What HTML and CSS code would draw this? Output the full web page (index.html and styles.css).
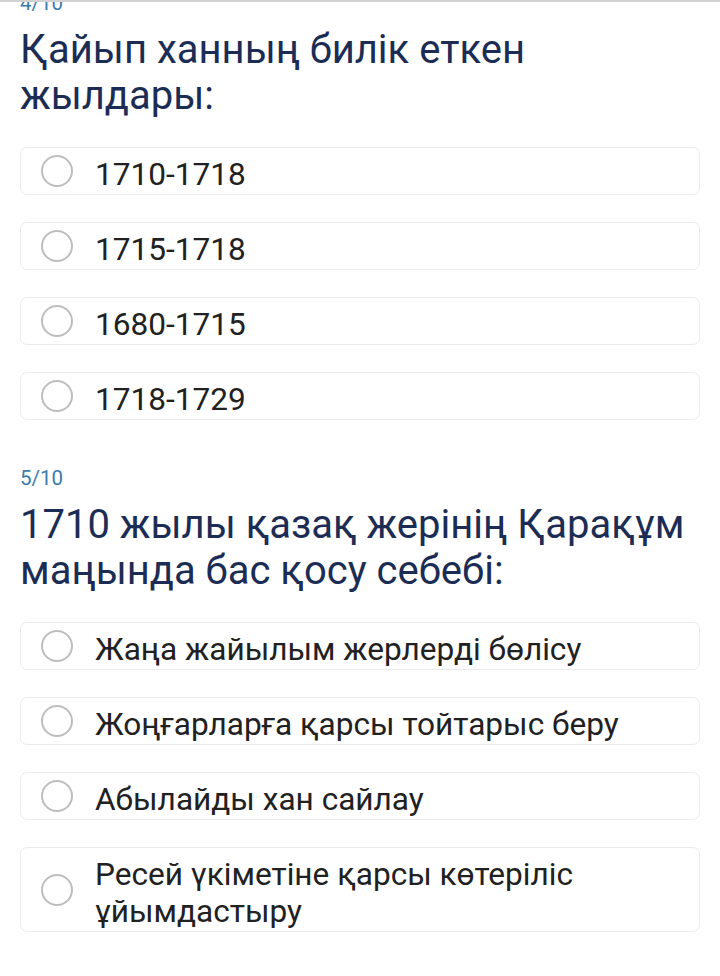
FILE: index.html
```html
<!DOCTYPE html>
<html lang="kk">
<head>
<meta charset="utf-8">
<title>Тест</title>
<link rel="stylesheet" href="styles.css">
</head>
<body>
<div class="top-line"></div>
<main class="page">
  <section class="question first">
    <div class="counter">4/10</div>
    <h2 class="title">Қайып ханның билік еткен жылдары:</h2>
    <div class="options">
      <label class="option"><span class="radio"></span><span class="text">1710-1718</span></label>
      <label class="option"><span class="radio"></span><span class="text">1715-1718</span></label>
      <label class="option"><span class="radio"></span><span class="text">1680-1715</span></label>
      <label class="option"><span class="radio"></span><span class="text">1718-1729</span></label>
    </div>
  </section>
  <section class="question">
    <div class="counter">5/10</div>
    <h2 class="title">1710 жылы қазақ жерінің Қарақұм маңында бас қосу себебі:</h2>
    <div class="options">
      <label class="option"><span class="radio"></span><span class="text">Жаңа жайылым жерлерді бөлісу</span></label>
      <label class="option"><span class="radio"></span><span class="text">Жоңғарларға қарсы тойтарыс беру</span></label>
      <label class="option"><span class="radio"></span><span class="text">Абылайды хан сайлау</span></label>
      <label class="option"><span class="radio"></span><span class="text">Ресей үкіметіне қарсы көтеріліс ұйымдастыру</span></label>
    </div>
  </section>
</main>
</body>
</html>
```

FILE: styles.css
```css
* { box-sizing: border-box; }

html, body {
  margin: 0;
  padding: 0;
  background: #ffffff;
  overflow: hidden;
}

body {
  font-family: Roboto, "Noto Sans", "Liberation Sans", sans-serif;
  color: #212121;
  position: relative;
  width: 720px;
  height: 976px;
}

.top-line {
  position: absolute;
  left: 0;
  top: 0;
  width: 720px;
  height: 2px;
  background: #d2d2d2;
  z-index: 2;
}

.page {
  padding: 0 20px;
}

.question.first {
  margin-top: -9px;
}

.question + .question {
  margin-top: 46px;
}

.counter {
  font-size: 20.5px;
  line-height: 24px;
  color: #3b7cab;
  margin-bottom: 12px;
}

.title {
  margin: 0 0 28px 0;
  font-weight: 400;
  font-size: 40px;
  line-height: 46px;
  color: #1c2d55;
}

.options {
  display: flex;
  flex-direction: column;
  gap: 27px;
}

.option {
  display: flex;
  align-items: center;
  border: 1px solid #ebebeb;
  border-radius: 7px;
  padding: 1.5px 20px 1.5px 20px;
  min-height: 48px;
  background: #fff;
}

.radio {
  flex: 0 0 32px;
  width: 32px;
  height: 32px;
  border: 2px solid #bdbdbd;
  border-radius: 50%;
  margin-right: 22px;
}

.text {
  font-size: 31.6px;
  line-height: 37px;
  padding-top: 6px;
  color: #212121;
}
```
